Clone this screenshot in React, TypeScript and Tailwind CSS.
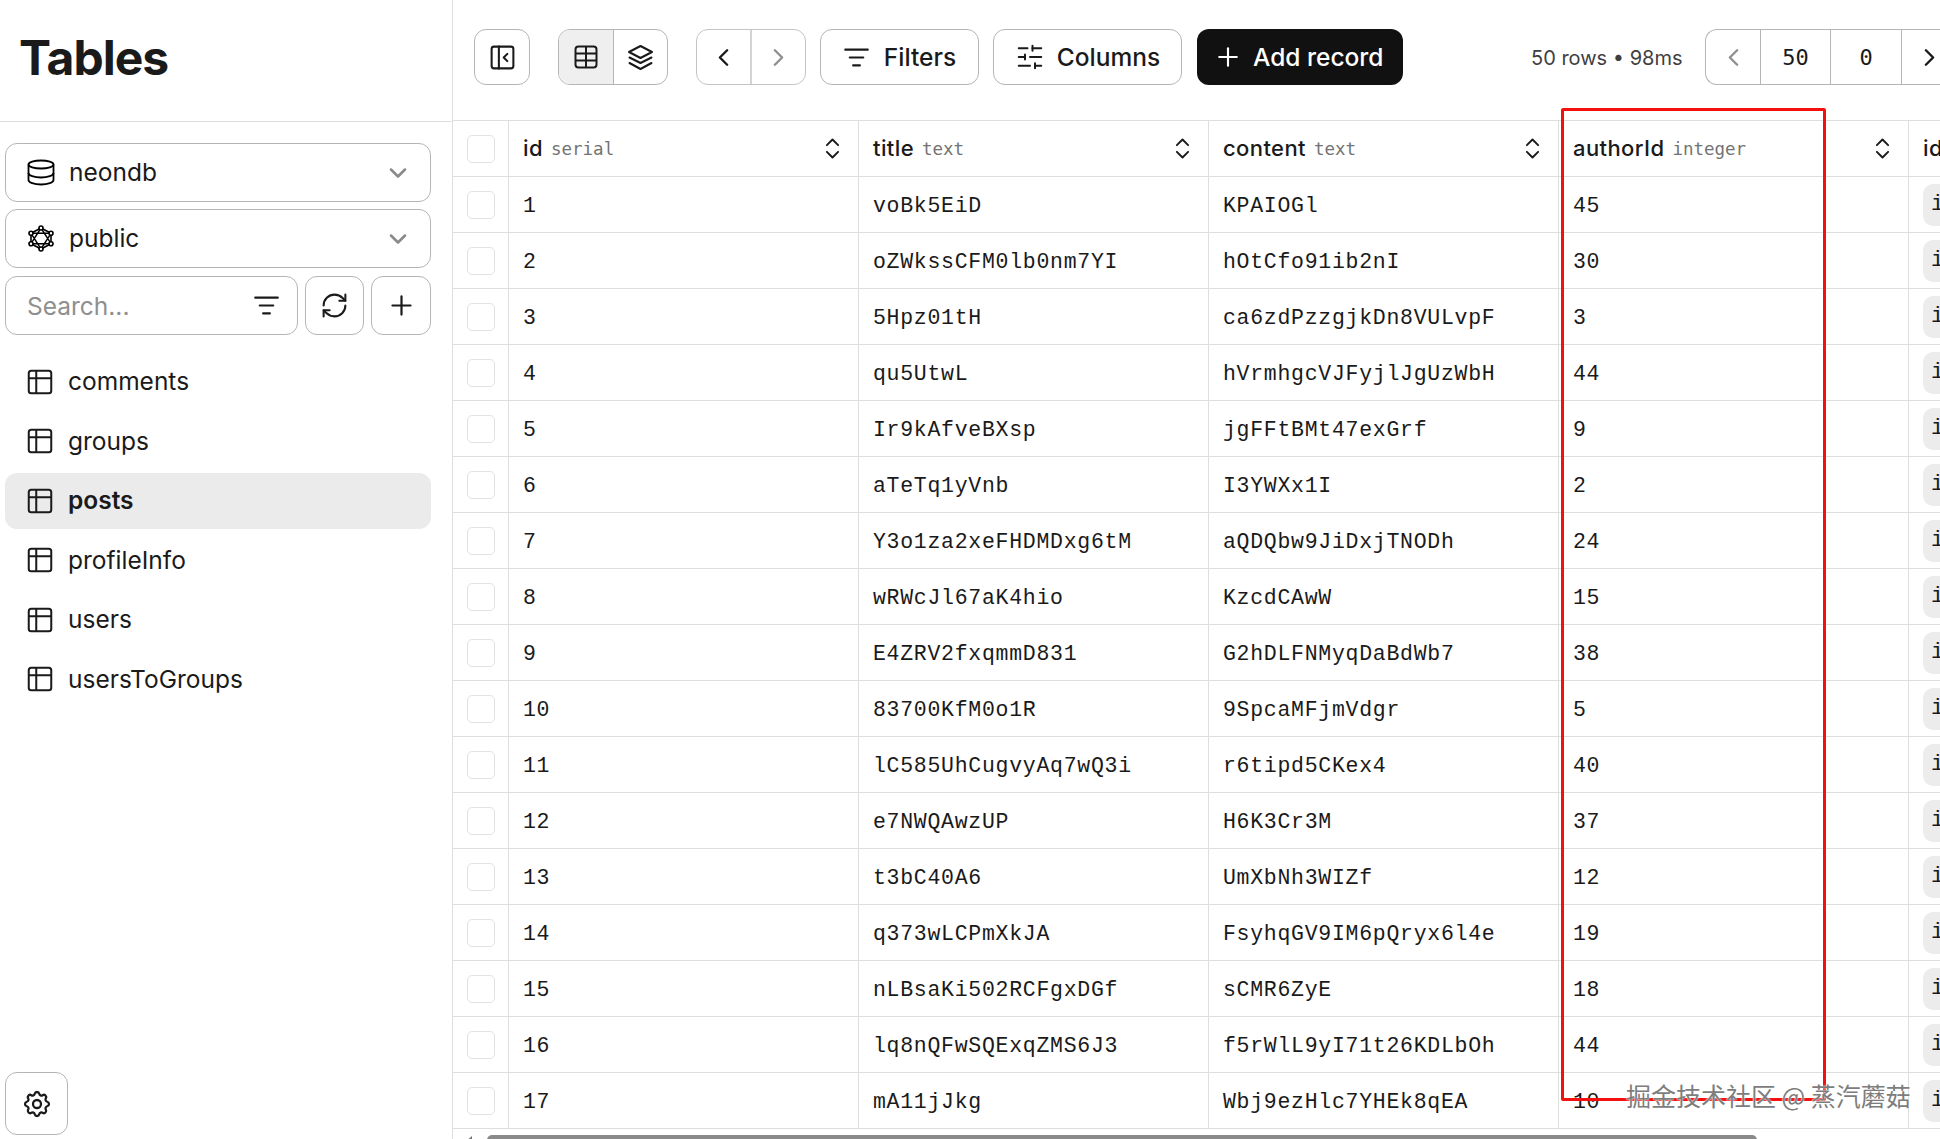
import { ReactNode } from 'react';
import {
    ChevronDown, ChevronLeft, ChevronRight, ChevronsUpDown, ListFilter, PanelLeftClose,
    Plus, RefreshCw, SlidersHorizontal, Table2,
} from 'lucide-react';
import { TbSettings } from 'react-icons/tb';

const tables = ['comments', 'groups', 'posts', 'profileInfo', 'users', 'usersToGroups'];

const rows = [
    ['voBk5EiD', 'KPAIOGl', '45'],
    ['oZWkssCFM0lb0nm7YI', 'hOtCfo91ib2nI', '30'],
    ['5Hpz01tH', 'ca6zdPzzgjkDn8VULvpF', '3'],
    ['qu5UtwL', 'hVrmhgcVJFyjlJgUzWbH', '44'],
    ['Ir9kAfveBXsp', 'jgFFtBMt47exGrf', '9'],
    ['aTeTq1yVnb', 'I3YWXx1I', '2'],
    ['Y3o1za2xeFHDMDxg6tM', 'aQDQbw9JiDxjTNODh', '24'],
    ['wRWcJl67aK4hio', 'KzcdCAwW', '15'],
    ['E4ZRV2fxqmmD831', 'G2hDLFNMyqDaBdWb7', '38'],
    ['83700KfM0o1R', '9SpcaMFjmVdgr', '5'],
    ['lC585UhCugvyAq7wQ3i', 'r6tipd5CKex4', '40'],
    ['e7NWQAwzUP', 'H6K3Cr3M', '37'],
    ['t3bC40A6', 'UmXbNh3WIZf', '12'],
    ['q373wLCPmXkJA', 'FsyhqGV9IM6pQryx6l4e', '19'],
    ['nLBsaKi502RCFgxDGf', 'sCMR6ZyE', '18'],
    ['lq8nQFwSQExqZMS6J3', 'f5rWlL9yI71t26KDLbOh', '44'],
    ['mA11jJkg', 'Wbj9ezHlc7YHEk8qEA', '10'],
];

const columns = [
    ['id', 'serial'],
    ['title', 'text'],
    ['content', 'text'],
    ['authorId', 'integer'],
];

const DatabaseIcon = () => (
    <svg width="28" height="27" viewBox="0 0 28 27" fill="none" stroke="currentColor" strokeWidth="1.8" className="shrink-0">
        <ellipse cx="14" cy="5.5" rx="12.5" ry="4" />
        <path d="M1.5 5.5v15.5c0 2.4 5.6 4.5 12.5 4.5s12.5-2.1 12.5-4.5V5.5" />
        <path d="M1.5 14c0 2.4 5.6 4.5 12.5 4.5s12.5-2.1 12.5-4.5" />
    </svg>
);

const SchemaIcon = () => (
    <svg width="28" height="27" viewBox="0 0 28 27" fill="none" stroke="currentColor" strokeWidth="1.6" strokeLinejoin="round" className="shrink-0">
        <path d="M14 3 24 8.3v10.4L14 24 4 18.7V8.3Z" />
        <path d="M14 3 24 18.7H4ZM14 24 4 8.3h20Z" strokeWidth="1.4" />
        <circle cx="14" cy="3" r="2" fill="white" />
        <circle cx="24" cy="8.3" r="2" fill="white" />
        <circle cx="24" cy="18.7" r="2" fill="white" />
        <circle cx="14" cy="24" r="2" fill="white" />
        <circle cx="4" cy="18.7" r="2" fill="white" />
        <circle cx="4" cy="8.3" r="2" fill="white" />
    </svg>
);

const GridIcon = () => (
    <svg width="24" height="24" viewBox="0 0 24 24" fill="none" stroke="currentColor" strokeWidth="2">
        <rect x="1.5" y="1.5" width="21" height="21" rx="3" />
        <path d="M12 1.5v21M1.5 8.5h21M1.5 15.5h21" />
    </svg>
);

const StackIcon = () => (
    <svg width="27" height="27" viewBox="0 0 27 27" fill="none" stroke="currentColor" strokeWidth="2" strokeLinejoin="round" strokeLinecap="round">
        <path d="M13.5 2 25 8l-11.500 6L2 8Z" />
        <path d="M2.500 13.500 13.500 19l11-5.500" />
        <path d="M2.500 19 13.500 25l11-6" />
    </svg>
);

const Box = ({ className, children }: { className: string; children: ReactNode }) => (
    <div className={`flex shrink-0 items-center justify-center border border-[#b5b5b5] rounded-xl bg-white ${className}`}>
        {children}
    </div>
);

const SelectBox = ({ icon, label }: { icon: ReactNode; label: string }) => (
    <div className="flex h-[59px] items-center rounded-xl border border-[#b5b5b5] pl-[21px] pr-[18px]">
        {icon}
        <span className="ml-[14px] flex-1 text-[24.500px] text-[#1a1a1a]">{label}</span>
        <ChevronDown size={28} strokeWidth={2.2} className="text-[#8a8a8a]" />
    </div>
);

const Sidebar = () => (
    <aside className="flex w-[453px] shrink-0 flex-col border-r border-[#dedede] pb-[4px]">
        <div className="flex h-[122px] shrink-0 items-center border-b border-[#dedede] pb-[6px] pl-[19px]">
            <h1 className="text-[48px] font-bold tracking-[-1px] text-[#1a1a1a]">Tables</h1>
        </div>
        <div className="flex flex-col gap-[7px] pl-[5px] pr-[21px] pt-[21px]">
            <SelectBox icon={<DatabaseIcon />} label="neondb" />
            <SelectBox icon={<SchemaIcon />} label="public" />
            <div className="mt-[1px] flex h-[59px] gap-[7px]">
                <div className="flex w-[293px] items-center rounded-xl border border-[#b5b5b5] pl-[21px] pr-[17px]">
                    <span className="flex-1 pt-[1px] text-[24.500px] text-[#8f8f8f]">Search...</span>
                    <ListFilter size={27} strokeWidth={1.9} className="text-[#1a1a1a]" />
                </div>
                <Box className="w-[59px] text-[#1a1a1a]"><RefreshCw size={29} strokeWidth={1.7} /></Box>
                <Box className="w-[60px] text-[#1a1a1a]"><Plus size={31} strokeWidth={1.7} /></Box>
            </div>
        </div>
        <nav className="mt-[17px] flex flex-col pl-[5px] pr-[21px]">
            {tables.map((name) => (
                <div
                    key={name}
                    className={`flex h-[59.500px] items-center pl-[20px] text-[24.500px] text-[#1a1a1a] ${name === 'posts' ? 'relative' : ''}`}
                >
                    {name === 'posts' && <div className="absolute inset-x-0 top-[2px] h-[56px] rounded-xl bg-[#ebebeb]" />}
                    <Table2 size={30} strokeWidth={1.6} className="relative shrink-0" />
                    <span className={`relative ml-[13px] ${name === 'posts' ? 'font-semibold' : ''}`}>{name}</span>
                </div>
            ))}
        </nav>
        <div className="mt-auto pl-[5px]">
            <Box className="h-[63px] w-[63px] text-[#1a1a1a]"><TbSettings size={32} strokeWidth={1.7} /></Box>
        </div>
    </aside>
);

const Toolbar = () => (
    <div className="flex h-[120px] shrink-0 items-start pl-[21px] pt-[29px] text-[#1a1a1a]">
        <Box className="h-[56px] w-[56px]"><PanelLeftClose size={29} strokeWidth={1.7} /></Box>
        <div className="ml-[28px] flex h-[56px] w-[110px] shrink-0 overflow-hidden rounded-xl border border-[#b5b5b5]">
            <div className="flex flex-1 items-center justify-center border-r border-[#b5b5b5] bg-[#efefef]"><GridIcon /></div>
            <div className="flex flex-1 items-center justify-center"><StackIcon /></div>
        </div>
        <div className="ml-[28px] flex h-[56px] w-[110px] shrink-0 overflow-hidden rounded-xl border border-[#c4c4c4]">
            <div className="flex flex-1 items-center justify-center border-r-2 border-[#d4d4d4]"><ChevronLeft size={29} strokeWidth={2} /></div>
            <div className="flex flex-1 items-center justify-center text-[#8f8f8f]"><ChevronRight size={29} strokeWidth={2} /></div>
        </div>
        <Box className="ml-[14px] h-[56px] w-[159px] gap-[14px]">
            <ListFilter size={27} strokeWidth={1.9} />
            <span className="text-[24.500px] font-medium">Filters</span>
        </Box>
        <Box className="ml-[14px] h-[56px] w-[189px] gap-[12px]">
            <SlidersHorizontal size={30} strokeWidth={1.6} />
            <span className="text-[24.500px] font-medium">Columns</span>
        </Box>
        <div className="ml-[15px] flex h-[56px] w-[206px] shrink-0 items-center gap-[10px] rounded-xl bg-[#111111] pl-[16px] text-white">
            <Plus size={30} strokeWidth={1.7} />
            <span className="text-[24.500px] font-medium">Add record</span>
        </div>
        <span className="ml-[128px] mt-[14px] w-[174px] shrink-0 whitespace-nowrap text-[20px] text-[#3f3f3f]">50 rows • 98ms</span>
        <div className="flex h-[56px] shrink-0 rounded-l-xl border-y border-l border-[#b5b5b5] font-['DejaVu_Sans_Mono',monospace] text-[22px]">
            <div className="flex w-[55px] items-center justify-center border-r border-[#b5b5b5] text-[#8f8f8f]"><ChevronLeft size={29} strokeWidth={2} /></div>
            <div className="flex w-[70px] items-center justify-center border-r border-[#b5b5b5]">50</div>
            <div className="flex w-[71px] items-center justify-center border-r border-[#b5b5b5]">0</div>
            <div className="flex w-[55px] items-center justify-center"><ChevronRight size={29} strokeWidth={2} /></div>
        </div>
    </div>
);

const Check = () => <div className="h-[28px] w-[28px] rounded-[5px] border border-[#e2e2e2]" />;

const CheckCell = () => (
    <div className="flex w-[56px] shrink-0 items-center justify-center border-r border-[#dedede]"><Check /></div>
);

const HeaderRow = () => (
    <div className="flex h-[57px] w-max shrink-0 border-y border-[#dedede]">
        <CheckCell />
        {columns.map(([name, type]) => (
            <div key={name} className="flex w-[350px] shrink-0 items-center border-r border-[#dedede] pl-[14px] pr-[12px]">
                <span className="text-[22px] font-medium tracking-[0.4px] text-[#1a1a1a]">{name}</span>
                <span className="ml-[8px] mt-[2px] flex-1 font-['DejaVu_Sans_Mono',monospace] text-[17.500px] text-[#737373]">{type}</span>
                <ChevronsUpDown size={27} strokeWidth={1.700} className="text-[#1a1a1a]" />
            </div>
        ))}
        <div className="flex w-[350px] shrink-0 items-center pl-[14px] text-[22px] font-medium tracking-[0.4px] text-[#1a1a1a]">id</div>
    </div>
);

const DataRow = ({ id, row }: { id: number; row: string[] }) => (
    <div className="flex h-[56px] w-max shrink-0 border-b border-[#dedede] font-['Liberation_Mono',monospace] text-[21.500px] tracking-[0.720px] text-[#1a1a1a]">
        <CheckCell />
        <div className="flex w-[350px] shrink-0 items-center border-r border-[#dedede] pl-[14px] pt-[3px]">{id}</div>
        {row.map((value, i) => (
            <div key={i} className="flex w-[350px] shrink-0 items-center border-r border-[#dedede] pl-[14px] pt-[3px]">{value}</div>
        ))}
        <div className="flex w-[350px] shrink-0 items-center pl-[14px]">
            <div className="flex h-[42px] w-[80px] items-center rounded-[10px] bg-[#ececec] pl-[8px]">i</div>
        </div>
    </div>
);

const Scrollbar = () => (
    <div className="flex flex-1 items-start pt-[6px]">
        <svg width="12" height="12" viewBox="0 0 12 12" className="ml-[10px] mr-[12px] mt-[1px] shrink-0">
            <path d="M2 6 9 0v12Z" fill="#777777" />
        </svg>
        <div className="h-[12px] w-[1270px] rounded-t-[5px] bg-[#8a8a8a]" />
    </div>
);

export default function App() {
    return (
        <div className="relative flex h-[1139px] w-[1940px] overflow-hidden bg-white font-['Inter',sans-serif]">
            <Sidebar />
            <main className="flex min-w-0 flex-1 flex-col overflow-hidden">
                <Toolbar />
                <HeaderRow />
                {rows.map((row, i) => (
                    <DataRow key={i} id={i + 1} row={row} />
                ))}
                <Scrollbar />
            </main>

            {/* Marca vermelha da coluna e marca d'água da imagem */}
            <div className="pointer-events-none absolute left-[1561px] top-[108px] h-[993px] w-[265px] rounded-[2px] border-[3px] border-[#f51010]" />
            <div className="pointer-events-none absolute left-[1626px] top-[1076px] whitespace-nowrap font-['Noto_Sans_CJK_SC',sans-serif] text-[25px] leading-[38px] text-[#7d7d7d] [text-shadow:0_0_2px_#ffffff,0_0_1px_#ffffff]">
                掘金技术社区 @ 蒸汽蘑菇
            </div>
        </div>
    );
}
